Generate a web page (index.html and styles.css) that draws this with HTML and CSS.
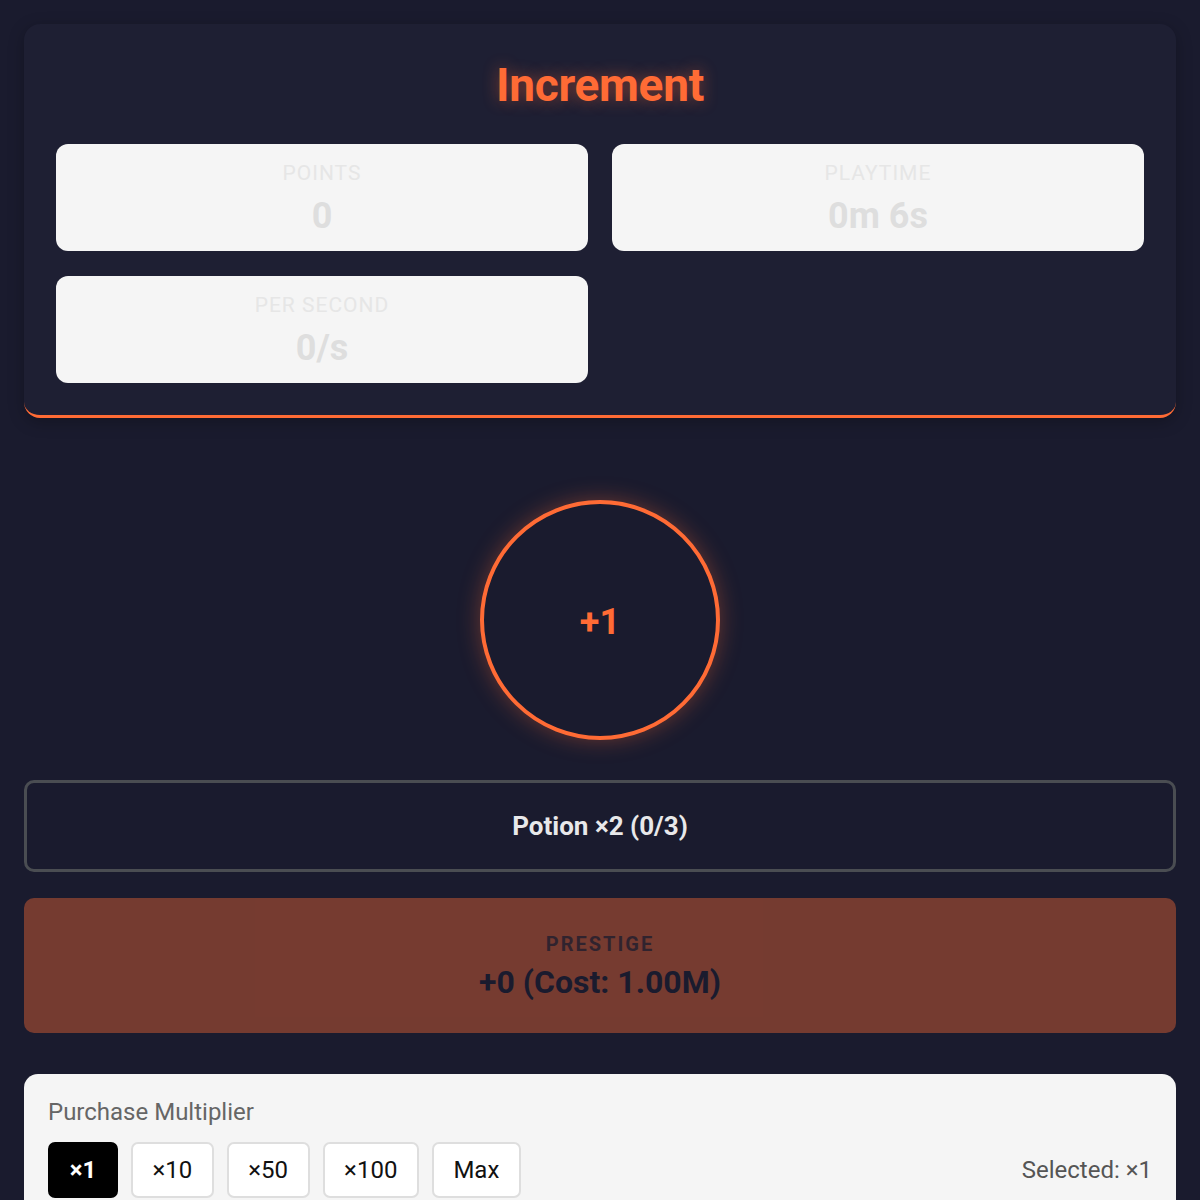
FILE: index.html
```html
<!DOCTYPE html>
<html lang="en">
<head>
<meta charset="utf-8">
<title>Increment</title>
<link rel="stylesheet" href="styles.css">
</head>
<body>
<div class="app">
  <header class="header">
    <h1 class="title">Increment</h1>
    <div class="stats">
      <div class="stat"><div class="stat-label">Points</div><div class="stat-value">0</div></div>
      <div class="stat"><div class="stat-label">Playtime</div><div class="stat-value">0m 6s</div></div>
      <div class="stat"><div class="stat-label">Per Second</div><div class="stat-value">0/s</div></div>
    </div>
  </header>

  <section class="click-area">
    <button class="click-btn">+1</button>
  </section>

  <button class="potion-btn">Potion ×2 (0/3)</button>

  <button class="prestige-btn">
    <span class="prestige-label">PRESTIGE</span>
    <span class="prestige-value">+0 (Cost: 1.00M)</span>
  </button>

  <section class="multiplier">
    <div class="mult-title">Purchase Multiplier</div>
    <div class="mult-row">
      <div class="mult-buttons">
        <button class="mult-btn active">×1</button>
        <button class="mult-btn">×10</button>
        <button class="mult-btn">×50</button>
        <button class="mult-btn">×100</button>
        <button class="mult-btn">Max</button>
      </div>
      <div class="mult-selected">Selected: ×1</div>
    </div>
  </section>
</div>
</body>
</html>
```
FILE: styles.css
```css
* { box-sizing: border-box; }
html, body {
  margin: 0;
  padding: 0;
  background: #1a1b2e;
  font-family: Roboto, "Liberation Sans", sans-serif;
}
.app {
  padding: 24px;
  display: flex;
  flex-direction: column;
}
.header {
  background: #1e1f33;
  border-radius: 16px;
  border-bottom: 3px solid #ff6b35;
  padding: 32px 32px 32px;
  box-shadow: 0 4px 16px rgba(0,0,0,0.25);
}
.title {
  margin: 1px 0 31px;
  text-align: center;
  color: #ff6b35;
  font-size: 46px;
  font-weight: 700;
  line-height: 56px;
  letter-spacing: -0.3px;
  text-shadow: 0 0 16px rgba(255,107,53,0.45);
}
.stats {
  display: grid;
  grid-template-columns: 1fr 1fr;
  gap: 25px 24px;
}
.stat {
  background: #f5f5f5;
  border-radius: 12px;
  height: 107px;
  display: flex;
  flex-direction: column;
  align-items: center;
  padding-top: 16px;
}
.stat-label {
  text-transform: uppercase;
  font-size: 21px;
  letter-spacing: 1px;
  color: #e6e6e6;
  line-height: 26px;
}
.stat-value {
  font-size: 36px;
  font-weight: 700;
  color: #dedede;
  line-height: 42px;
  margin-top: 9px;
}
.click-area {
  display: flex;
  justify-content: center;
  padding: 82px 0 40px;
}
.click-btn {
  width: 240px;
  height: 240px;
  border-radius: 50%;
  border: 4px solid #ff6b35;
  background: #1a1b2e;
  color: #ff6b35;
  font-family: Roboto, "Liberation Sans", sans-serif;
  font-size: 36px;
  font-weight: 700;
  box-shadow: 0 0 22px rgba(255,107,53,0.35);
  padding: 4px 0 0;
}
.potion-btn {
  height: 92px;
  border: 3px solid #4a4d52;
  border-radius: 10px;
  background: #1a1b2e;
  color: #e8e8ea;
  font-family: Roboto, "Liberation Sans", sans-serif;
  font-size: 26px;
  font-weight: 700;
  margin-bottom: 26px;
}
.prestige-btn {
  height: 135px;
  border: none;
  border-radius: 10px;
  background: #ff6b35;
  color: #1a1b2e;
  opacity: 0.4;
  font-family: Roboto, "Liberation Sans", sans-serif;
  display: flex;
  flex-direction: column;
  align-items: center;
  justify-content: center;
  padding-top: 4px;
  margin-bottom: 41px;
}
.prestige-label {
  font-size: 20px;
  font-weight: 700;
  letter-spacing: 2px;
  line-height: 24px;
  opacity: 0.75;
}
.prestige-value {
  font-size: 32px;
  font-weight: 700;
  line-height: 40px;
  margin-top: 6px;
}
.multiplier {
  background: #f5f5f5;
  border-radius: 14px;
  padding: 24px 24px 24px;
}
.mult-title {
  color: #666;
  font-size: 24px;
  line-height: 28px;
  margin-bottom: 16px;
}
.mult-row {
  display: flex;
  justify-content: space-between;
  align-items: center;
}
.mult-buttons {
  display: flex;
  gap: 13px;
}
.mult-btn {
  height: 56px;
  border: 2px solid #dedede;
  background: #fff;
  border-radius: 7px;
  color: #111;
  font-family: Roboto, "Liberation Sans", sans-serif;
  font-size: 24px;
  padding: 0 19.5px;
}
.mult-btn.active {
  background: #000;
  border-color: #000;
  color: #fff;
  font-weight: 700;
  padding: 0 19.5px;
  width: 70px;
}
.mult-selected {
  color: #555;
  font-size: 24px;
}
```
